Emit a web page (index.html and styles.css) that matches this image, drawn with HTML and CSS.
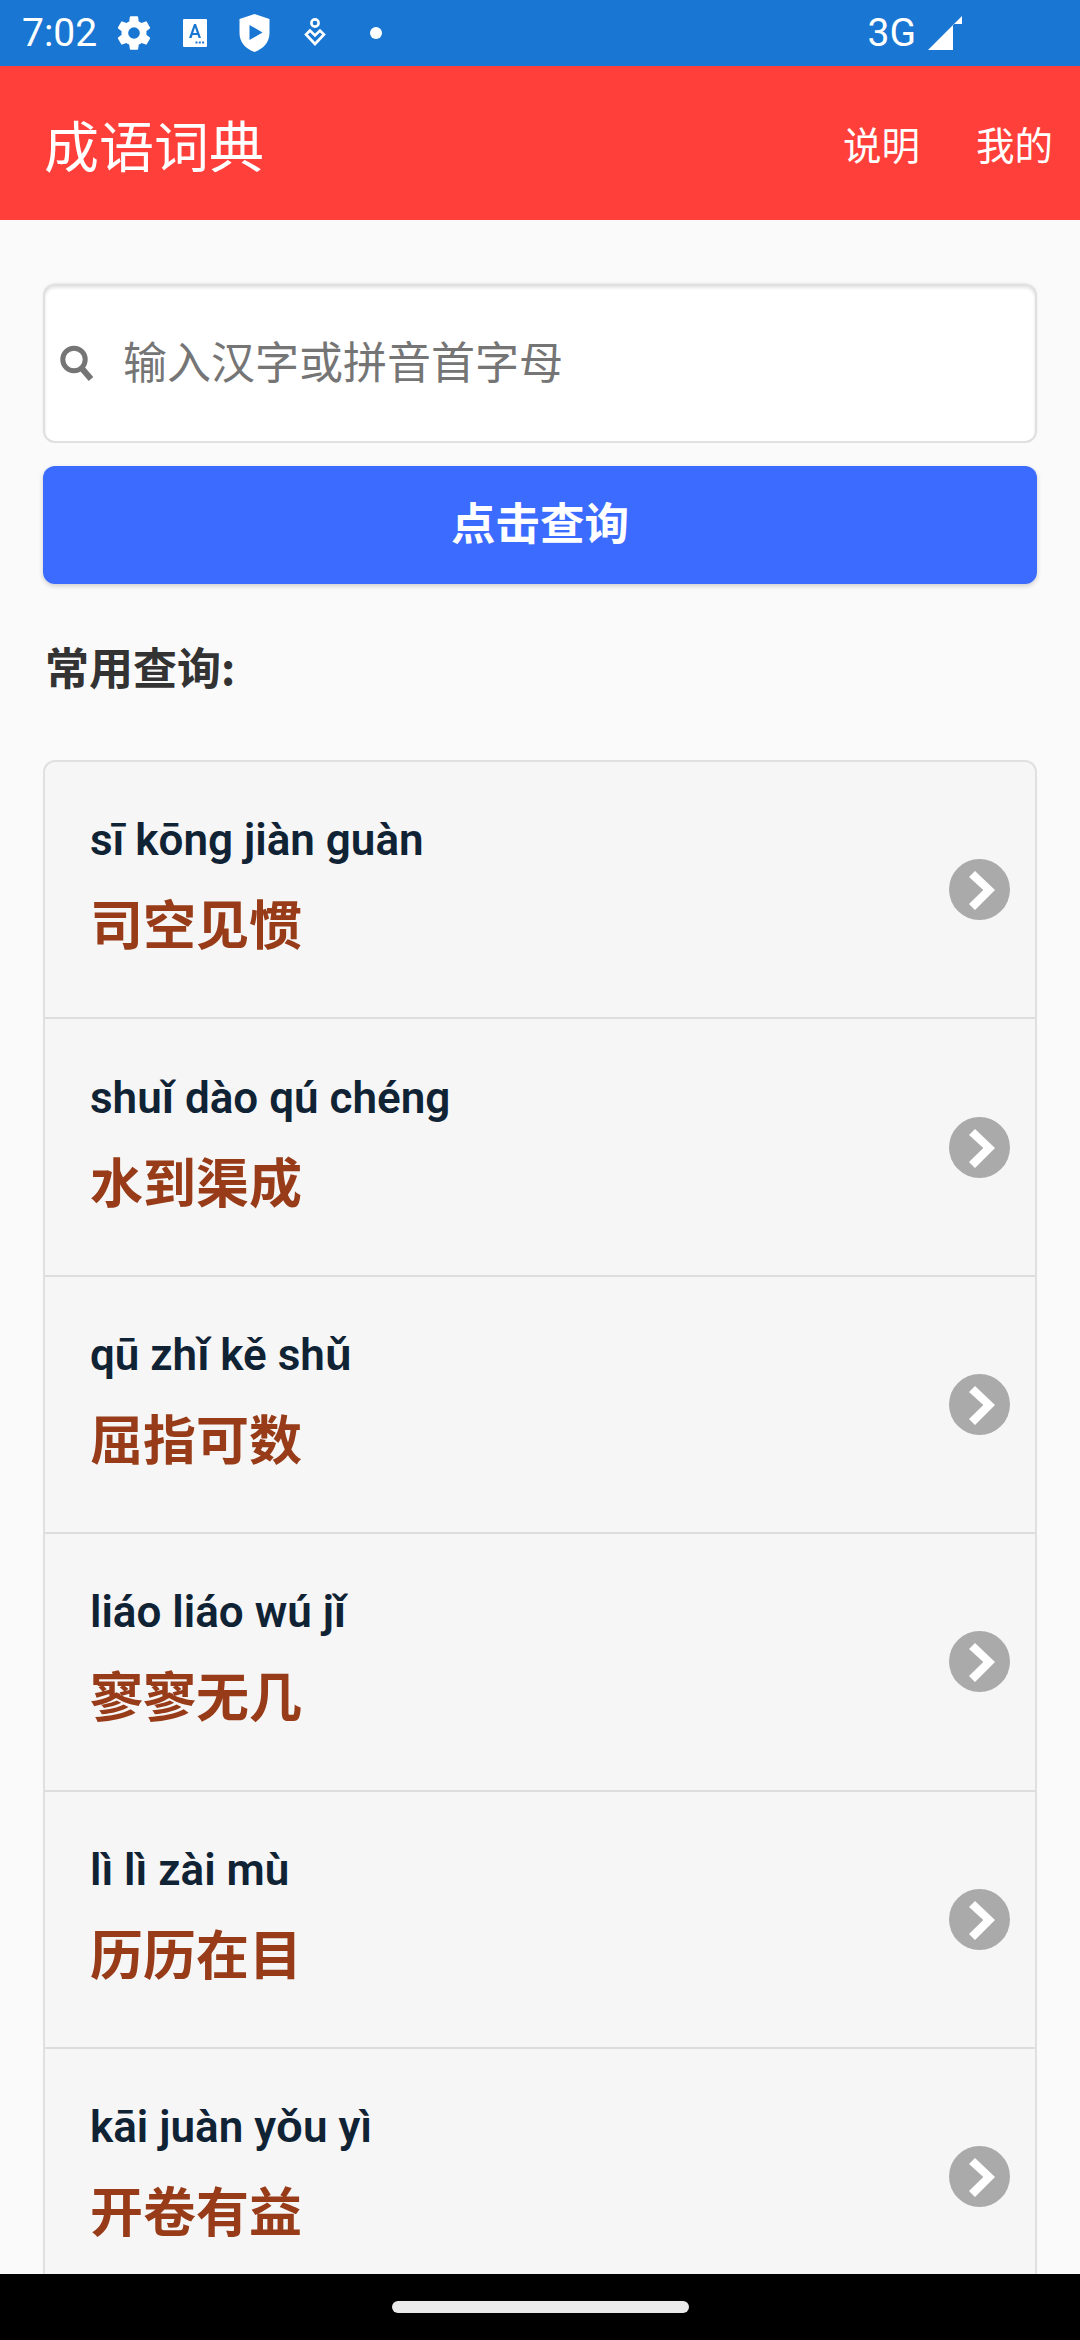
FILE: index.html
```html
<!DOCTYPE html>
<html lang="zh-CN">
<head>
<meta charset="utf-8">
<title>成语词典</title>
<link rel="stylesheet" href="styles.css">
</head>
<body>
<div class="phone">
  <div class="status">
    <span class="time">7:02</span>
    <svg class="st-icon gear" viewBox="0 0 24 24"><path fill="#fff" fill-rule="evenodd" d="M19.4 13c.04-.33.1-.66.1-1s-.06-.67-.1-1l2.1-1.65c.2-.15.25-.42.12-.64l-2-3.46c-.12-.22-.39-.3-.61-.22l-2.49 1c-.52-.4-1.06-.73-1.69-.98l-.37-2.65A.5.5 0 0 0 14 2h-4a.5.5 0 0 0-.49.42l-.38 2.65c-.63.25-1.17.59-1.69.98l-2.49-1a.5.5 0 0 0-.61.22l-2 3.46c-.13.22-.07.49.12.64L4.57 11c-.04.33-.07.66-.07 1s.03.67.07 1l-2.11 1.65c-.19.15-.25.42-.12.64l2 3.46c.12.22.39.3.61.22l2.49-1c.52.4 1.06.73 1.69.98l.38 2.65c.03.24.24.42.49.42h4c.25 0 .46-.18.49-.42l.37-2.65c.63-.26 1.17-.59 1.69-.98l2.49 1c.22.08.49 0 .61-.22l2-3.46c.13-.22.07-.49-.12-.64L19.4 13zM12 15.5a3.5 3.5 0 1 1 0-7 3.5 3.5 0 0 1 0 7z"/></svg>
    <svg class="st-icon doc" viewBox="0 0 26 30"><path fill="#fff" fill-rule="evenodd" d="M2 1h22a1 1 0 0 1 1 1v26a1 1 0 0 1-1 1H2a1 1 0 0 1-1-1V2a1 1 0 0 1 1-1zm10 5-5 14h2.600l1-3h5l1 3H19L14 6zm1 3.500 1.800 5.500h-3.600zM13.500 23.500h2v2h-2zm3.300 0h2v2h-2zm3.300 0h2v2h-2z"/></svg>
    <svg class="st-icon shield" viewBox="0 0 30 38"><path fill="#fff" fill-rule="evenodd" d="M15 0 30 5v14c0 9.500-6.500 16-15 19C6.500 35 0 28.500 0 19V5zM10 11v15l13-7.500z"/></svg>
    <svg class="st-icon heart" viewBox="0 0 22 30"><g fill="none" stroke="#fff" stroke-width="2.600"><circle cx="11" cy="5" r="3.600"/><path d="M6 12.500 2 16.500 11 26l9-9.500-4-4-5 5z"/></g></svg>
    <span class="dot"></span>
    <span class="st-fill"></span>
    <span class="net">3G</span>
    <svg class="signal" viewBox="0 0 34 34"><path fill="#fff" d="M34 0v8h-9v26H0z"/></svg>
  </div>

  <header class="bar">
    <h1 class="title">成语词典</h1>
    <nav class="links">
      <span>说明</span>
      <span>我的</span>
    </nav>
  </header>

  <main class="content">
    <div class="search">
      <svg class="search-icon" viewBox="0 0 34 37"><g fill="none" stroke="#757575"><circle cx="14" cy="14.500" r="11.200" stroke-width="5"/><path d="M21.500 23 31 34" stroke-width="6"/></g></svg>
      <input class="search-input" type="text" placeholder="输入汉字或拼音首字母">
    </div>
    <button class="go" type="button">点击查询</button>
    <h2 class="hint">常用查询:</h2>

    <ul class="list">
      <li class="row">
        <div class="words"><p class="pinyin">sī kōng jiàn guàn</p><p class="idiom">司空见惯</p></div>
        <svg class="more" viewBox="0 0 61 61"><circle cx="30.500" cy="30.500" r="30.500" fill="#aaa"/><path fill="#fff" d="M26 12 46 31 26 51 20 45 34.300 31 20 18z"/></svg>
      </li>
      <li class="row">
        <div class="words"><p class="pinyin">shuǐ dào qú chéng</p><p class="idiom">水到渠成</p></div>
        <svg class="more" viewBox="0 0 61 61"><circle cx="30.500" cy="30.500" r="30.500" fill="#aaa"/><path fill="#fff" d="M26 12 46 31 26 51 20 45 34.300 31 20 18z"/></svg>
      </li>
      <li class="row">
        <div class="words"><p class="pinyin">qū zhǐ kě shǔ</p><p class="idiom">屈指可数</p></div>
        <svg class="more" viewBox="0 0 61 61"><circle cx="30.500" cy="30.500" r="30.500" fill="#aaa"/><path fill="#fff" d="M26 12 46 31 26 51 20 45 34.300 31 20 18z"/></svg>
      </li>
      <li class="row">
        <div class="words"><p class="pinyin">liáo liáo wú jǐ</p><p class="idiom">寥寥无几</p></div>
        <svg class="more" viewBox="0 0 61 61"><circle cx="30.500" cy="30.500" r="30.500" fill="#aaa"/><path fill="#fff" d="M26 12 46 31 26 51 20 45 34.300 31 20 18z"/></svg>
      </li>
      <li class="row">
        <div class="words"><p class="pinyin">lì lì zài mù</p><p class="idiom">历历在目</p></div>
        <svg class="more" viewBox="0 0 61 61"><circle cx="30.500" cy="30.500" r="30.500" fill="#aaa"/><path fill="#fff" d="M26 12 46 31 26 51 20 45 34.300 31 20 18z"/></svg>
      </li>
      <li class="row">
        <div class="words"><p class="pinyin">kāi juàn yǒu yì</p><p class="idiom">开卷有益</p></div>
        <svg class="more" viewBox="0 0 61 61"><circle cx="30.500" cy="30.500" r="30.500" fill="#aaa"/><path fill="#fff" d="M26 12 46 31 26 51 20 45 34.300 31 20 18z"/></svg>
      </li>
    </ul>
  </main>

  <footer class="nav"><span class="handle"></span></footer>
</div>
</body>
</html>
```
FILE: styles.css
```css
* { box-sizing: border-box; }

html, body { margin: 0; padding: 0; }

body {
  font-family: Roboto, "Noto Sans CJK SC", sans-serif;
  background: #fafafa;
}

.phone {
  width: 1080px;
  height: 2340px;
  display: flex;
  flex-direction: column;
  overflow: hidden;
}

/* system status strip */
.status {
  flex: 0 0 66px;
  background: #1976d2;
  color: #fff;
  display: flex;
  align-items: center;
  padding: 0 118px 0 22px;
}

.time { font-size: 39px; line-height: 1; margin-right: 17px; }
.st-icon { display: block; flex: none; }
.gear { width: 40px; height: 40px; margin-right: 28px; }
.doc { width: 26px; height: 30px; margin-right: 31px; }
.shield { width: 31px; height: 38px; margin-right: 34px; }
.heart { width: 22px; height: 30px; margin-right: 44px; }
.dot { width: 12px; height: 12px; border-radius: 50%; background: #fff; }
.st-fill { flex: 1; }
.net { font-size: 39px; line-height: 1; margin-right: 12px; }
.signal { width: 34px; height: 34px; display: block; flex: none; }

/* app bar */
.bar {
  flex: 0 0 154px;
  background: #ff3f3a;
  color: #fff;
  display: flex;
  align-items: center;
  justify-content: space-between;
  padding: 0 27px 0 44px;
}

.title {
  margin: 0;
  font-size: 55px;
  font-weight: 400;
  font-family: "Noto Sans CJK SC", sans-serif;
}

.links {
  display: flex;
  gap: 56px;
  font-size: 38.500px;
  font-family: "Noto Sans CJK SC", sans-serif;
}

.content {
  flex: 1;
  min-height: 0;
  overflow: hidden;
  padding: 64px 43px 0;
}

/* search box */
.search {
  height: 159px;
  background: #fff;
  border: 2px solid #e0e0e0;
  border-radius: 12px;
  box-shadow: inset 0 2px 3px rgba(0, 0, 0, .1), 0 -1px 2px rgba(0, 0, 0, .08);
  display: flex;
  align-items: center;
  padding-left: 15px;
  gap: 29px;
}

.search-icon { width: 34px; height: 37px; display: block; flex: none; }

.search-input {
  flex: 1;
  min-width: 0;
  height: 60px;
  margin-bottom: 7px;
  border: 0;
  outline: 0;
  padding: 0;
  background: transparent;
  font: 44px "Noto Sans CJK SC", sans-serif;
  color: #757575;
}

.search-input::placeholder { color: #757575; opacity: 1; }

.go {
  display: block;
  width: 100%;
  height: 118px;
  margin-top: 23px;
  padding: 0 0 9px;
  border: 0;
  border-radius: 12px;
  background: #3b6cff;
  color: #fff;
  font: 700 44.500px "Noto Sans CJK SC", sans-serif;
  box-shadow: 0 2px 5px rgba(0, 0, 0, .18);
}

.hint {
  margin: 57px 0 1px 2px;
  height: 118px;
  font: 700 44px/50px "Noto Sans CJK SC", sans-serif;
  color: #333;
}

/* idiom list */
.list {
  list-style: none;
  margin: 0;
  padding: 0;
  background: #f6f6f6;
  border: 2px solid #e0e0e0;
  border-bottom: 0;
  border-radius: 12px 12px 0 0;
}

.row {
  height: 257.400px;
  border-bottom: 2px solid #ddd;
  display: flex;
  align-items: center;
  justify-content: space-between;
  padding: 0 25px 0 45px;
}

.words { padding-bottom: 8px; }

.pinyin {
  margin: 0;
  font: 600 44px/53px Roboto, sans-serif;
  color: #102335;
}

.idiom {
  margin: 20px 0 0;
  font: 700 53px/70px "Noto Sans CJK SC", sans-serif;
  color: #973b18;
}

.more { width: 61px; height: 61px; display: block; flex: none; }

/* gesture navigation area */
.nav {
  flex: 0 0 66px;
  background: #000;
  display: flex;
  justify-content: center;
  padding-top: 27px;
}

.handle {
  width: 297px;
  height: 12px;
  border-radius: 6px;
  background: #eaeaea;
}
```
